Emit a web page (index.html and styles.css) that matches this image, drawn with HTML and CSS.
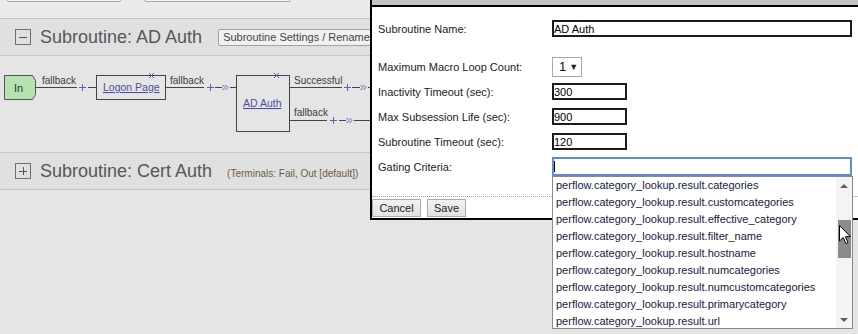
FILE: index.html
```html
<!DOCTYPE html>
<html lang="en">
<head>
  <meta charset="UTF-8" />
  <title>Policy Editor - Subroutine Settings</title>
  <link rel="stylesheet" href="styles.css">
</head>
<body>

  <!-- TOOLBAR (scrolled mostly out of view) -->
  <div class="toolbar">
    <button class="tool-button tool-add"></button>
    <button class="tool-button tool-apply"></button>
  </div>

  <!-- SUBROUTINE: AD AUTH -->
  <div class="sub-header">
    <svg class="toggle" width="16" height="16" viewBox="0 0 16 16">
      <rect x="0.5" y="0.5" width="15" height="15" fill="none" stroke="#6f6f6f" />
      <path d="M4 8.5 H12" stroke="#555" />
    </svg>
    <span class="sub-title">Subroutine: AD Auth</span>
    <button class="settings-button">Subroutine Settings / Rename</button>
  </div>

  <div class="diagram">
    <svg width="370" height="96" viewBox="0 0 370 96">
      <g class="wires" stroke="#444" fill="none">
        <path d="M35 31.5 H77" />
        <path d="M88 31.5 H96" />
        <path d="M166 31.5 H204" />
        <path d="M215 31.5 H222 M230 31.5 H236" />
        <path d="M290 31.5 H342" />
        <path d="M352 31.5 H360 M368 31.5 H370" />
        <path d="M290 64.5 H327" />
        <path d="M339 64.5 H346 M354 64.5 H370" />
      </g>

      <!-- In terminal -->
      <path d="M4.5 19.5 H32.5 L35.5 24.5 V38.5 L32.5 43.5 H4.5 Z" fill="#b3e4b0" stroke="#555" />
      <text class="node-text" x="14" y="36">In</text>

      <!-- Logon Page -->
      <rect x="96.5" y="19.5" width="69" height="24" fill="none" stroke="#444" />
      <text class="node-link" x="103" y="35">Logon Page</text>

      <!-- AD Auth -->
      <rect x="236.5" y="19.5" width="53" height="56" fill="none" stroke="#444" />
      <text class="node-link" x="243" y="51">AD Auth</text>

      <!-- branch labels -->
      <text class="branch" x="42" y="28">fallback</text>
      <text class="branch" x="170" y="28">fallback</text>
      <text class="branch" x="294" y="28">Successful</text>
      <text class="branch" x="294" y="60">fallback</text>

      <g class="marks" stroke="#5a63a8" fill="none">
        <!-- delete crosses -->
        <path d="M149 17 L154 22 M154 17 L149 22" />
        <path d="M274 17 L279 22 M279 17 L274 22" />
        <!-- add buttons -->
        <path d="M79 31.5 H86 M82.5 28 V35" />
        <path d="M207 31.5 H214 M210.5 28 V35" />
        <path d="M344 31.5 H351 M347.5 28 V35" />
        <path d="M330 64.5 H337 M333.5 61 V68" />
        <!-- terminal arrows -->
        <path d="M222.5 29 L225 31.5 L222.5 34 M225.5 29 L228 31.5 L225.5 34" />
        <path d="M360.5 29 L363 31.5 L360.5 34 M363.5 29 L366 31.5 L363.5 34" />
        <path d="M346.5 62 L349 64.5 L346.5 67 M349.5 62 L352 64.5 L349.5 67" />
      </g>
    </svg>
  </div>

  <!-- SUBROUTINE: CERT AUTH -->
  <div class="sub-header">
    <svg class="toggle" width="16" height="16" viewBox="0 0 16 16">
      <rect x="0.5" y="0.5" width="15" height="15" fill="none" stroke="#6f6f6f" />
      <path d="M4 8.5 H12 M8.5 4 V12" stroke="#555" />
    </svg>
    <span class="sub-title">Subroutine: Cert Auth</span>
    <span class="terminals">(Terminals: Fail, Out [default])</span>
  </div>

  <!-- SETTINGS DIALOG -->
  <div class="dialog">
    <div class="dialog-title"></div>
    <form class="dialog-body">
      <div class="form-row">
        <label>Subroutine Name:</label>
        <input class="text-input wide" type="text" value="AD Auth" />
      </div>
      <div class="form-row spaced">
        <label>Maximum Macro Loop Count:</label>
        <div class="select-box"><span class="select-value">1</span><span class="select-arrow">▼</span></div>
      </div>
      <div class="form-row">
        <label>Inactivity Timeout (sec):</label>
        <input class="text-input short" type="text" value="300" />
      </div>
      <div class="form-row">
        <label>Max Subsession Life (sec):</label>
        <input class="text-input short" type="text" value="900" />
      </div>
      <div class="form-row">
        <label>Subroutine Timeout (sec):</label>
        <input class="text-input short" type="text" value="120" />
      </div>
      <div class="form-row">
        <label>Gating Criteria:</label>
        <div class="gating">
          <input class="text-input wide focused" type="text" value="" />
          <span class="caret"></span>

          <!-- autocomplete list -->
          <div class="suggest">
            <ul class="suggest-list">
              <li>perflow.category_lookup.result.categories</li>
              <li>perflow.category_lookup.result.customcategories</li>
              <li>perflow.category_lookup.result.effective_category</li>
              <li>perflow.category_lookup.result.filter_name</li>
              <li>perflow.category_lookup.result.hostname</li>
              <li>perflow.category_lookup.result.numcategories</li>
              <li>perflow.category_lookup.result.numcustomcategories</li>
              <li>perflow.category_lookup.result.primarycategory</li>
              <li>perflow.category_lookup.result.url</li>
            </ul>
            <div class="scrollbar">
              <div class="scroll-btn"><span class="arrow-up"></span></div>
              <div class="scroll-track"><div class="scroll-thumb"></div></div>
              <div class="scroll-btn"><span class="arrow-down"></span></div>
            </div>
          </div>
        </div>
      </div>
    </form>
    <div class="dialog-buttons">
      <button class="cancel-button">Cancel</button>
      <button class="save-button">Save</button>
    </div>
  </div>

  <!-- mouse pointer over the scrollbar -->
  <svg class="pointer" width="13" height="20" viewBox="0 0 13 20">
    <path d="M0.5 0.5 V16 L4.2 12.4 L6.8 18.6 L9 17.7 L6.5 11.7 H11.5 Z" fill="#fff" stroke="#000" stroke-linejoin="round" />
  </svg>

</body>
</html>
```

FILE: styles.css
```css
/* ---------------------------------------------
   GENERAL
--------------------------------------------- */
* {
  box-sizing: border-box;
}

body {
  margin: 0;
  width: 858px;
  height: 334px;
  overflow: hidden;
  position: relative;
  background: #e5e5e5;
  font-family: "Liberation Sans", Arial, sans-serif;
  font-size: 11px;
  color: #222;
}

/* ---------------------------------------------
   TOOLBAR
--------------------------------------------- */
.toolbar {
  height: 19px;
  display: flex;
  gap: 23px;
  padding-left: 7px;
  background: #ebebeb;
  border-bottom: 1px solid #c4c4c4;
  overflow: hidden;
}
.tool-button {
  margin-top: -18px;
  height: 20px;
  background: #f4f4f4;
  border: 1px solid #a9a9a9;
  border-radius: 2px;
}
.tool-add {
  width: 114px;
}
.tool-apply {
  width: 147px;
}

/* ---------------------------------------------
   SUBROUTINE HEADERS
--------------------------------------------- */
.sub-header {
  height: 37px;
  display: flex;
  align-items: center;
  padding-left: 15px;
  background: #e0e0e0;
  border-bottom: 1px solid #c4c4c4;
  white-space: nowrap;
}
.toggle {
  display: block;
  flex: none;
}
.sub-title {
  margin-left: 9px;
  font-size: 18px;
  line-height: 1;
  color: #575757;
}
.settings-button {
  margin-left: 16px;
  height: 17px;
  padding: 0 4px;
  font-family: inherit;
  font-size: 11px;
  color: #444;
  background: #f1f1f1;
  border: 1px solid #a3a3a3;
  border-radius: 2px;
}
.terminals {
  margin-left: 15px;
  margin-top: 5px;
  font-size: 10px;
  color: #6b5c45;
}

/* ---------------------------------------------
   FLOW DIAGRAM
--------------------------------------------- */
.diagram {
  height: 97px;
  border-bottom: 1px solid #c4c4c4;
}
.diagram svg {
  display: block;
}
.node-text {
  font-size: 11px;
  fill: #333;
}
.node-link {
  font-size: 10.5px;
  fill: #4e4ea0;
  text-decoration: underline;
}
.branch {
  font-size: 10px;
  fill: #3c3c3c;
}

/* ---------------------------------------------
   SETTINGS DIALOG
--------------------------------------------- */
.dialog {
  position: absolute;
  left: 370px;
  top: 0;
  z-index: 3;
  width: 500px;
  height: 220px;
  display: flex;
  flex-direction: column;
  background: #fff;
  border-left: 2px solid #000;
  border-bottom: 2px solid #000;
}
.dialog-title {
  height: 7px;
  flex: none;
  background: #c3c3c3;
  border-bottom: 2px solid #000;
}
.dialog-body {
  margin: 0;
  padding: 9px 0 17px 6px;
}
.form-row {
  height: 25px;
  display: flex;
  align-items: center;
}
.form-row.spaced {
  margin-top: 13px;
}
.form-row label {
  width: 174px;
  flex: none;
  color: #222;
}

.text-input {
  display: block;
  height: 17px;
  padding: 0;
  font-family: inherit;
  font-size: 11px;
  color: #000;
  background: #fff;
  border: 2px solid #1c1c1c;
  outline: none;
}
.wide {
  width: 300px;
}
.short {
  width: 75px;
}
.focused {
  height: 19px;
  border-color: #5f8dd3;
}

.select-box {
  width: 30px;
  height: 20px;
  display: flex;
  align-items: center;
  gap: 3px;
  padding-left: 6px;
  background: #fff;
  border: 1px solid #a8a8a8;
}
.select-value {
  font-size: 13px;
  color: #111;
}
.select-arrow {
  font-size: 9px;
  color: #222;
}

/* Gating criteria + autocomplete */
.gating {
  position: relative;
}
.caret {
  position: absolute;
  left: 2px;
  top: 4px;
  width: 1px;
  height: 11px;
  background: #000;
}
.suggest {
  position: absolute;
  left: 0;
  top: 100%;
  z-index: 4;
  width: 301px;
  height: 153px;
  display: flex;
  background: #fff;
  border: 1px solid #8a8a8a;
}
.suggest-list {
  flex: 1;
  margin: 0;
  padding: 0;
  list-style: none;
  overflow: hidden;
}
.suggest-list li {
  height: 17px;
  line-height: 16px;
  padding-left: 3px;
  font-size: 11px;
  color: #20203c;
  white-space: nowrap;
}
.scrollbar {
  width: 16px;
  flex: none;
  display: flex;
  flex-direction: column;
  background: #f4f4f4;
}
.scroll-btn {
  height: 17px;
  display: flex;
  align-items: center;
  justify-content: center;
}
.arrow-up {
  border-left: 4px solid transparent;
  border-right: 4px solid transparent;
  border-bottom: 4px solid #606060;
}
.arrow-down {
  border-left: 4px solid transparent;
  border-right: 4px solid transparent;
  border-top: 4px solid #606060;
}
.scroll-track {
  flex: 1;
  padding: 26px 0 0 2px;
}
.scroll-thumb {
  width: 13px;
  height: 38px;
  background: #8b8b8b;
}

/* Cancel / Save */
.dialog-buttons {
  flex: 1;
  display: flex;
  gap: 6px;
  padding-top: 2px;
  border-top: 1px dotted #a5a5a5;
}
.dialog-buttons button {
  height: 18px;
  padding: 0;
  font-family: inherit;
  font-size: 11px;
  color: #222;
  background: linear-gradient(#f2f2f2, #e2e2e2);
  border: 1px solid #acacac;
}
.cancel-button {
  width: 49px;
}
.save-button {
  width: 39px;
}

/* ---------------------------------------------
   MOUSE POINTER
--------------------------------------------- */
.pointer {
  position: absolute;
  left: 839px;
  top: 225px;
  z-index: 5;
}
```
